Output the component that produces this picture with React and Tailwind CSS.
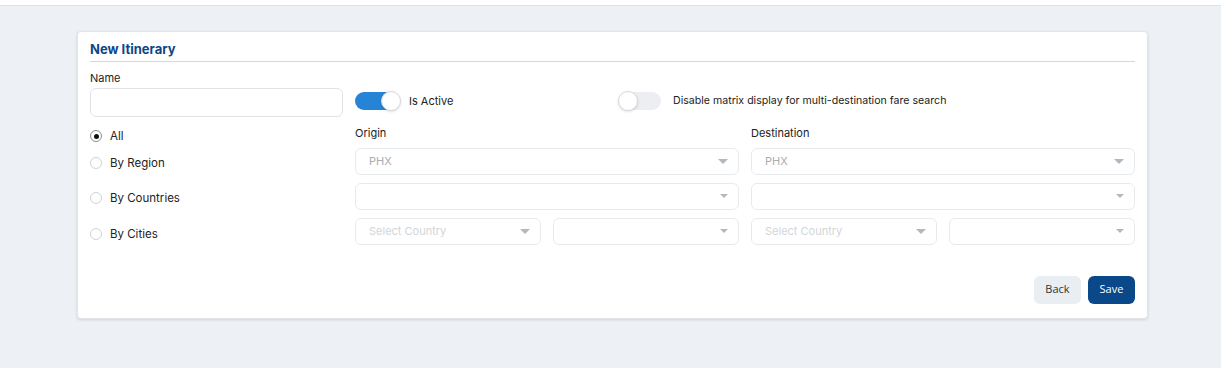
function Toggle({ on }) {
  return (
    <span
      className={
        "relative inline-flex h-[18px] items-center rounded-full " +
        (on ? "w-[45px] bg-[#2684d6]" : "w-[42px] bg-[#eceef1]")
      }
    >
      <span
        className={
          "absolute top-[-1px] h-[20px] w-[20px] rounded-full bg-white border border-[#d6dadf] shadow-sm " +
          (on ? "right-[-1px]" : "left-[-1px]")
        }
      />
    </span>
  )
}

function Radio({ label, checked }) {
  return (
    <label className="flex items-center gap-[8px] text-[11.5px] leading-[16px] text-[#222]">
      <span
        className={
          "flex h-[12px] w-[12px] items-center justify-center rounded-full border bg-white " +
          (checked ? "border-[#8a8f94]" : "border-[#cfd3d7]")
        }
      >
        {checked && <span className="h-[5px] w-[5px] rounded-full bg-[#111]" />}
      </span>
      {label}
    </label>
  )
}

function Select({ value, placeholder, big }) {
  return (
    <div className="flex h-[27px] items-center justify-between rounded-[6px] border border-[#e8ebee] bg-white pl-[13px] pr-[10px]">
      <span className={"text-[11px] " + (placeholder ? "text-[#d2d5d9]" : "text-[#a9adb2]")}>
        {value || placeholder || ""}
      </span>
      <span
        className={
          "h-0 w-0 border-x-transparent border-t-[#b3b8bf] " +
          (big ? "border-x-[5px] border-t-[5px]" : "border-x-[4px] border-t-[4px]")
        }
      />
    </div>
  )
}

export default function App() {
  return (
    <div className="min-h-[368px] bg-[#edf1f5] font-['Inter','Noto_Sans',sans-serif]">
      <div className="h-[6px] border-b border-[#dde2e7] bg-white" />

      <div className="ml-[77px] mt-[25px] w-[1071px] rounded-[4px] border border-[#e1e5e9] bg-white px-[12px] pb-[14px] pt-[8px] shadow-[0_1px_3px_rgba(0,0,0,0.12)]">
        <h1 className="pb-[1px] text-[13px] font-bold text-[#0d4688]">New Itinerary</h1>
        <div className="h-px bg-[#d4d8dc]" />

        {/* name + toggles */}
        <div className="mt-[8px] grid grid-cols-[253px_1fr] gap-x-[12px]">
          <div>
            <div className="text-[11px] text-[#222]">Name</div>
            <div className="mt-[2px] h-[29px] rounded-[6px] border border-[#dfe3e7] bg-white" />
          </div>
          <div className="flex items-end pb-[7px]">
            <div className="flex w-[264px] items-center gap-[9px]">
              <Toggle on />
              <span className="text-[11px] text-[#222]">Is Active</span>
            </div>
            <div className="flex items-center gap-[12px]">
              <Toggle />
              <span className="text-[10.6px] text-[#222]">Disable matrix display for multi-destination fare search</span>
            </div>
          </div>
        </div>

        {/* location grid */}
        <div className="mt-[8px] grid grid-cols-[253px_384px_384px] gap-x-[12px]">
          <div className="flex flex-col">
            <div className="mt-[3px]"><Radio label="All" checked /></div>
            <div className="mt-[11px]"><Radio label="By Region" /></div>
            <div className="mt-[19px]"><Radio label="By Countries" /></div>
            <div className="mt-[20px]"><Radio label="By Cities" /></div>
          </div>

          <div className="flex flex-col gap-[8px]">
            <div className="-mb-[2px] text-[11px] text-[#222]">Origin</div>
            <Select value="PHX" big />
            <Select />
            <div className="grid grid-cols-2 gap-[12px]">
              <Select placeholder="Select Country" big />
              <Select />
            </div>
          </div>

          <div className="flex flex-col gap-[8px]">
            <div className="-mb-[2px] text-[11px] text-[#222]">Destination</div>
            <Select value="PHX" big />
            <Select />
            <div className="grid grid-cols-2 gap-[12px]">
              <Select placeholder="Select Country" big />
              <Select />
            </div>
          </div>
        </div>

        <div className="mt-[31px] flex justify-end gap-[7px]">
          <button className="h-[28px] w-[47px] rounded-[6px] bg-[#e9eef3] text-[11px] text-[#333] font-['Open_Sans',sans-serif]">
            Back
          </button>
          <button className="h-[28px] w-[47px] rounded-[6px] bg-[#0b4889] text-[11px] text-white font-['Open_Sans',sans-serif]">
            Save
          </button>
        </div>
      </div>
    </div>
  )
}
